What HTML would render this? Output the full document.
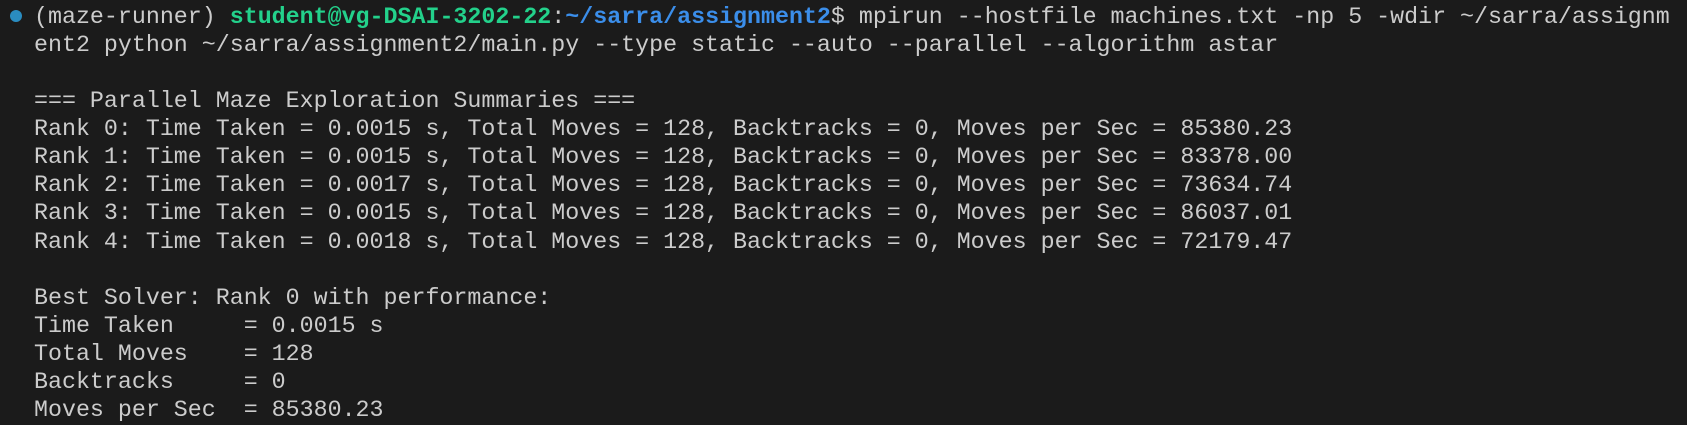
<!DOCTYPE html>
<html><head><meta charset="utf-8"><style>
html,body{margin:0;padding:0;background:#1b1b1b;width:1687px;height:425px;overflow:hidden}
pre{margin:0;position:absolute;left:34px;top:3px;font-family:"Liberation Mono","DejaVu Sans Mono",monospace;font-size:23.3px;line-height:28.07px;color:#cccccc;white-space:pre}
.g{color:#23d18b;font-weight:bold}.b{color:#3b8eea;font-weight:bold}
.dot{position:absolute;left:10px;top:10px;width:12px;height:12px;border-radius:50%;background:#2a8cc0}
</style></head><body>
<div class="dot"></div>
<pre>(maze-runner) <span class="g">student@vg-DSAI-3202-22</span>:<span class="b">~/sarra/assignment2</span>$ mpirun --hostfile machines.txt -np 5 -wdir ~/sarra/assignm
ent2 python ~/sarra/assignment2/main.py --type static --auto --parallel --algorithm astar

=== Parallel Maze Exploration Summaries ===
Rank 0: Time Taken = 0.0015 s, Total Moves = 128, Backtracks = 0, Moves per Sec = 85380.23
Rank 1: Time Taken = 0.0015 s, Total Moves = 128, Backtracks = 0, Moves per Sec = 83378.00
Rank 2: Time Taken = 0.0017 s, Total Moves = 128, Backtracks = 0, Moves per Sec = 73634.74
Rank 3: Time Taken = 0.0015 s, Total Moves = 128, Backtracks = 0, Moves per Sec = 86037.01
Rank 4: Time Taken = 0.0018 s, Total Moves = 128, Backtracks = 0, Moves per Sec = 72179.47

Best Solver: Rank 0 with performance:
Time Taken     = 0.0015 s
Total Moves    = 128
Backtracks     = 0
Moves per Sec  = 85380.23</pre>
</body></html>
